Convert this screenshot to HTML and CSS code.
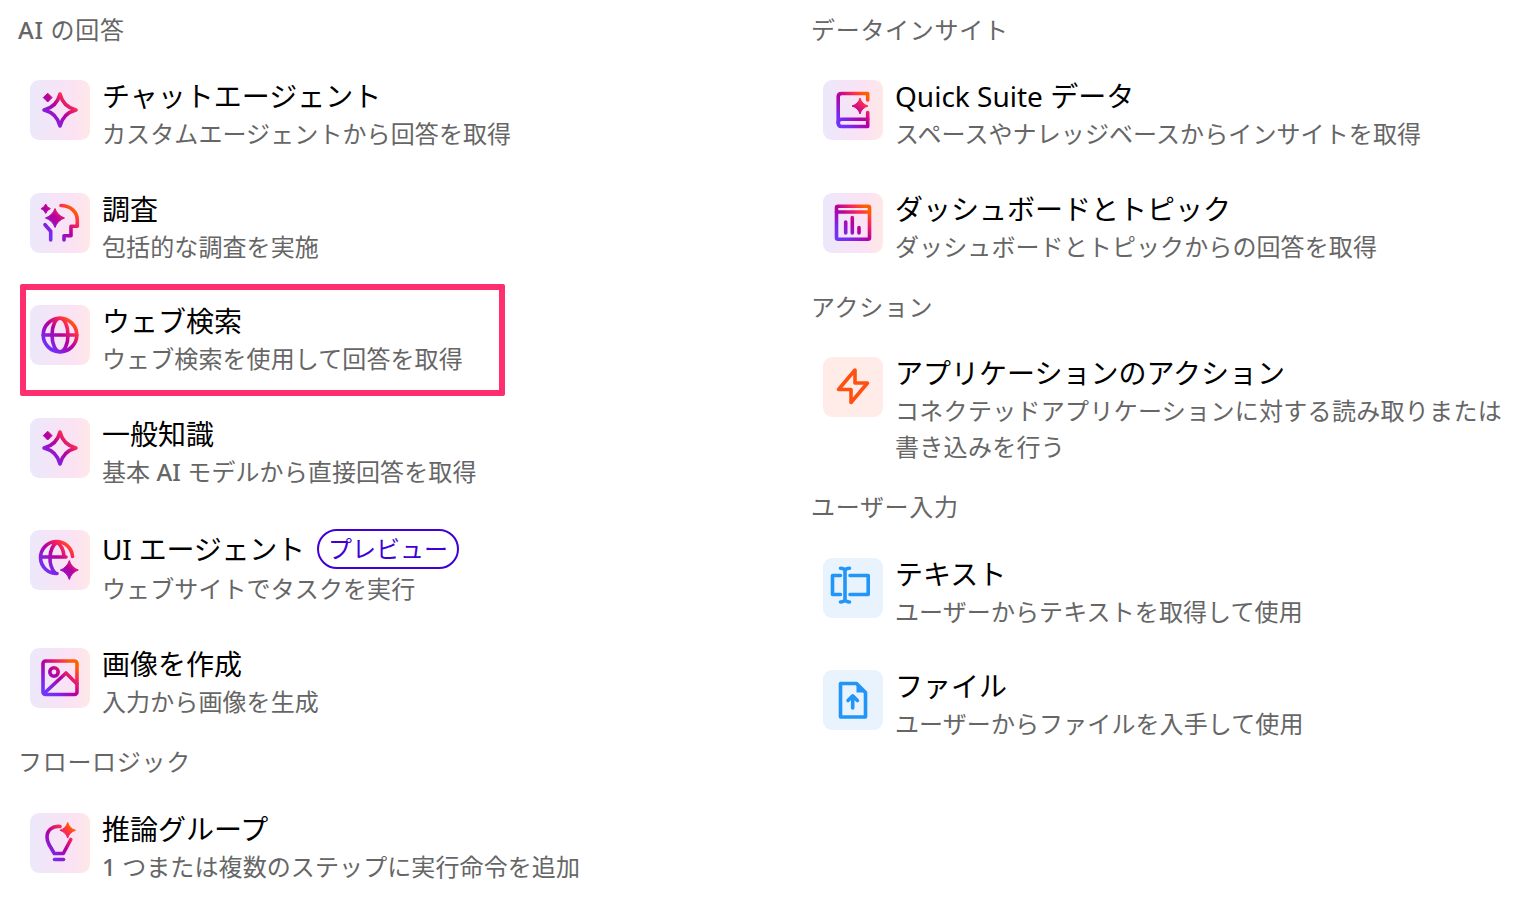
FILE: index.html
```html
<!DOCTYPE html>
<html lang="ja">
<head>
<meta charset="UTF-8">
<meta name="viewport" content="width=device-width, initial-scale=1.0">
<title>ステップの追加</title>
<link rel="stylesheet" href="styles.css">
</head>
<body>
<!-- shared gradient and the sparkle used by two rows -->
<svg class="svg-defs" aria-hidden="true">
  <defs>
    <linearGradient id="grad" gradientUnits="userSpaceOnUse" x1="12" y1="48" x2="48" y2="12">
      <stop offset="0" stop-color="#6a3cff"/>
      <stop offset="0.22" stop-color="#7a28f0"/>
      <stop offset="0.5" stop-color="#b5009e"/>
      <stop offset="0.75" stop-color="#ff2d50"/>
      <stop offset="0.88" stop-color="#ff5f00"/>
    </linearGradient>
    <g id="sparkle">
      <path class="line" d="M30 14q3.200 12.800 16 16q-12.800 3.200 -16 16q-3.200 -12.800 -16 -16q12.800 -3.200 16 -16z"/>
      <path class="solid" d="M17.700 13.200l4.400 4.400l-4.400 4.400l-4.400 -4.400z"/>
    </g>
  </defs>
</svg>

<main class="columns">
  <div class="column">
    <h2 class="group-title"><span class="latin">AI</span> の回答</h2>

    <div class="item">
      <div class="icon"><svg viewBox="0 0 60 60"><use href="#sparkle"/></svg></div>
      <div class="item-text">
        <div class="item-title">チャットエージェント</div>
        <div class="item-desc">カスタムエージェントから回答を取得</div>
      </div>
    </div>

    <div class="item">
      <div class="icon"><svg viewBox="0 0 60 60">
        <path class="solid" d="M25 15.500q2.500 7 9.500 9.500q-7 2.500 -9.500 9.500q-2.500 -7 -9.500 -9.500q7 -2.500 9.500 -9.500z"/>
        <path class="solid" d="M15.700 11q1.200 3.500 4.700 4.700q-3.500 1.200 -4.700 4.700q-1.200 -3.500 -4.700 -4.700q3.500 -1.200 4.700 -4.700z"/>
        <path class="line" d="M31 12.500c9 0 16.300 6 16.300 14.500v6.300h-6.300v9.400h-7v4.300"/>
        <path class="line" d="M15 31.700l5.700 6.600v8.700"/>
      </svg></div>
      <div class="item-text">
        <div class="item-title">調査</div>
        <div class="item-desc">包括的な調査を実施</div>
      </div>
    </div>

    <div class="item">
      <div class="icon"><svg viewBox="0 0 60 60">
        <circle class="line" cx="30" cy="30" r="16.800"/>
        <ellipse class="line" cx="30" cy="30" rx="8" ry="16.800"/>
        <path class="line" d="M13.200 30h33.600"/>
      </svg></div>
      <div class="item-text">
        <div class="item-title">ウェブ検索</div>
        <div class="item-desc">ウェブ検索を使用して回答を取得</div>
      </div>
      <div class="highlight"></div>
    </div>

    <div class="item">
      <div class="icon"><svg viewBox="0 0 60 60"><use href="#sparkle"/></svg></div>
      <div class="item-text">
        <div class="item-title">一般知識</div>
        <div class="item-desc">基本 <span class="latin">AI</span> モデルから直接回答を取得</div>
      </div>
    </div>

    <div class="item">
      <div class="icon"><svg viewBox="0 0 60 60">
        <path class="line" d="M27 43.500a16 16 0 1 1 15.500 -17"/>
        <path class="line" d="M27 12c-9 7 -9 23 -2 31"/>
        <path class="line" d="M27 12c4 3 6.500 8 7 14"/>
        <path class="line" d="M12 27h24"/>
        <path class="solid" d="M39.300 30.500q2.300 7.200 9 9.500q-6.700 2.300 -9 9.500q-2.300 -7.200 -9 -9.500q6.700 -2.300 9 -9.500z"/>
      </svg></div>
      <div class="item-text">
        <div class="item-title item-title-badge">UI エージェント<span class="badge">プレビュー</span></div>
        <div class="item-desc">ウェブサイトでタスクを実行</div>
      </div>
    </div>

    <div class="item">
      <div class="icon"><svg viewBox="0 0 60 60">
        <rect class="line" x="13" y="13" width="34" height="33.500" rx="2.500"/>
        <circle class="line" cx="24" cy="24" r="4.200"/>
        <path class="line" d="M14 45.500l22 -20.500l11 11"/>
      </svg></div>
      <div class="item-text">
        <div class="item-title">画像を作成</div>
        <div class="item-desc">入力から画像を生成</div>
      </div>
    </div>

    <h2 class="group-title group-title-tight">フローロジック</h2>

    <div class="item">
      <div class="icon"><svg viewBox="0 0 60 60">
        <path class="line" d="M30 13.500c-7.500 -1 -13 4 -13 10.500c0 3 .8 5 2 7.500l5.300 9h9l7.500 -14"/>
        <path class="line" d="M24.500 46.500h9"/>
        <path class="solid" d="M37.700 9.500q1.800 6 7.800 7.800q-6 1.800 -7.800 7.800q-1.800 -6 -7.800 -7.800q6 -1.800 7.800 -7.800z"/>
      </svg></div>
      <div class="item-text">
        <div class="item-title">推論グループ</div>
        <div class="item-desc"><span class="latin">1</span> つまたは複数のステップに実行命令を追加</div>
      </div>
    </div>
  </div>

  <div class="column">
    <h2 class="group-title">データインサイト</h2>

    <div class="item">
      <div class="icon"><svg viewBox="0 0 60 60">
        <path class="line" d="M44.700 20v-6.500h-26c-2.500 0 -3.500 1.500 -3.500 3.500v26c0 2.500 1.500 3.500 3.500 3.500h26v-14"/>
        <path class="line" d="M15.200 43c0 -2.500 1.500 -3.700 3.500 -3.700h26"/>
        <path class="solid" d="M37 18q1.800 6.200 8 8q-6.200 1.800 -8 8q-1.800 -6.200 -8 -8q6.200 -1.800 8 -8z"/>
      </svg></div>
      <div class="item-text">
        <div class="item-title">Quick Suite データ</div>
        <div class="item-desc">スペースやナレッジベースからインサイトを取得</div>
      </div>
    </div>

    <div class="item">
      <div class="icon"><svg viewBox="0 0 60 60">
        <rect class="line" x="13.500" y="13.200" width="33" height="33" rx="1.500"/>
        <path class="line" d="M13.500 19h33"/>
        <path class="line" d="M22.700 29v11M29.300 24.500v15.500M36 34.500v5.500"/>
      </svg></div>
      <div class="item-text">
        <div class="item-title">ダッシュボードとトピック</div>
        <div class="item-desc">ダッシュボードとトピックからの回答を取得</div>
      </div>
    </div>

    <h2 class="group-title">アクション</h2>

    <div class="item">
      <div class="icon icon-orange"><svg viewBox="0 0 60 60">
        <path class="line-orange" d="M32 13l-16.500 19.500h12.500v13l16.500 -19.500h-12.500z"/>
      </svg></div>
      <div class="item-text">
        <div class="item-title">アプリケーションのアクション</div>
        <div class="item-desc item-desc-wide">コネクテッドアプリケーションに対する読み取りまたは書き込みを行う</div>
      </div>
    </div>

    <h2 class="group-title">ユーザー入力</h2>

    <div class="item">
      <div class="icon icon-blue"><svg viewBox="0 0 60 60">
        <path class="line-blue" d="M17.500 17.500h-8v19h8M27 17.500h18.200v19h-18.200"/>
        <path class="line-blue" d="M22 12v30M17.500 10.200c2 0 3.500 .6 4.500 1.800c1 -1.200 2.500 -1.800 4.500 -1.800M17.500 44c2 0 3.500 -.6 4.500 -2c1 1.400 2.500 2 4.500 2"/>
      </svg></div>
      <div class="item-text">
        <div class="item-title">テキスト</div>
        <div class="item-desc">ユーザーからテキストを取得して使用</div>
      </div>
    </div>

    <div class="item">
      <div class="icon icon-blue"><svg viewBox="0 0 60 60">
        <path class="line-blue" d="M17.500 13.500h16l9 9v24.500h-25z"/>
        <path class="file-fold" d="M33.500 14v8.500h8.500z"/>
        <path class="line-blue" d="M29.700 38v-12M25 30.500l4.700 -4.700l4.700 4.700"/>
      </svg></div>
      <div class="item-text">
        <div class="item-title">ファイル</div>
        <div class="item-desc">ユーザーからファイルを入手して使用</div>
      </div>
    </div>
  </div>
</main>
</body>
</html>
```

FILE: styles.css
```css
* {
  box-sizing: border-box;
}

body {
  margin: 0;
  background-color: #fff;
  font-family: "Noto Sans", "Noto Sans CJK JP", sans-serif;
  color: #0f141a;
}

.svg-defs {
  position: absolute;
  width: 0;
  height: 0;
}

.columns {
  display: grid;
  grid-template-columns: 793px 1fr;
  padding: 6.6px 24px 0 18px;
}

.group-title {
  margin: 5.4px 0 10.5px;
  font-size: 24px;
  font-weight: 400;
  line-height: 36px;
  letter-spacing: .7px;
  color: #666;
}

.group-title-tight {
  margin: 6px 0 10.5px;
}

.latin {
  font-weight: 500;
}

.item {
  position: relative;
  display: flex;
  gap: 12px;
  padding: 18.75px 12px;
}

.icon {
  flex: none;
  width: 60px;
  height: 60px;
  margin-top: 3px;
  border-radius: 9px;
  background: linear-gradient(90deg, #ece8fb 0%, #fbe2f4 70%, #ffe8e6 100%);
}

.icon svg {
  display: block;
  width: 60px;
  height: 60px;
}

.icon-orange {
  background: #ffece8;
}

.icon-blue {
  background: #e8f3fe;
}

.line,
.line-orange,
.line-blue {
  fill: none;
  stroke-width: 3.6;
  stroke-linecap: round;
  stroke-linejoin: round;
}

.line {
  stroke: url(#grad);
}

.line-orange {
  stroke: #ff5014;
}

.line-blue {
  stroke: #2196f8;
}

.solid {
  fill: url(#grad);
  stroke: url(#grad);
  stroke-width: 1;
  stroke-linejoin: round;
}

.file-fold {
  fill: #2196f8;
}

.item-title {
  font-size: 28px;
  line-height: 39px;
  color: #000;
}

.item-title-badge {
  display: flex;
  align-items: center;
  gap: 12px;
  height: 44px;
  letter-spacing: -.2px;
}

.badge {
  height: 40px;
  padding: 0 9px;
  border: 2px solid #4000d8;
  border-radius: 20px;
  font-size: 24px;
  line-height: 36px;
  letter-spacing: 0;
  color: #4000d8;
}

.item-desc {
  font-size: 24px;
  line-height: 36px;
  letter-spacing: .1px;
  color: #666;
}

.item-desc-wide {
  letter-spacing: .3px;
}

/* annotation box drawn over the selected row */
.highlight {
  position: absolute;
  left: 2px;
  top: .6px;
  width: 485px;
  height: 112px;
  border: 6px solid #ff2e6e;
  border-radius: 2px;
}
```
